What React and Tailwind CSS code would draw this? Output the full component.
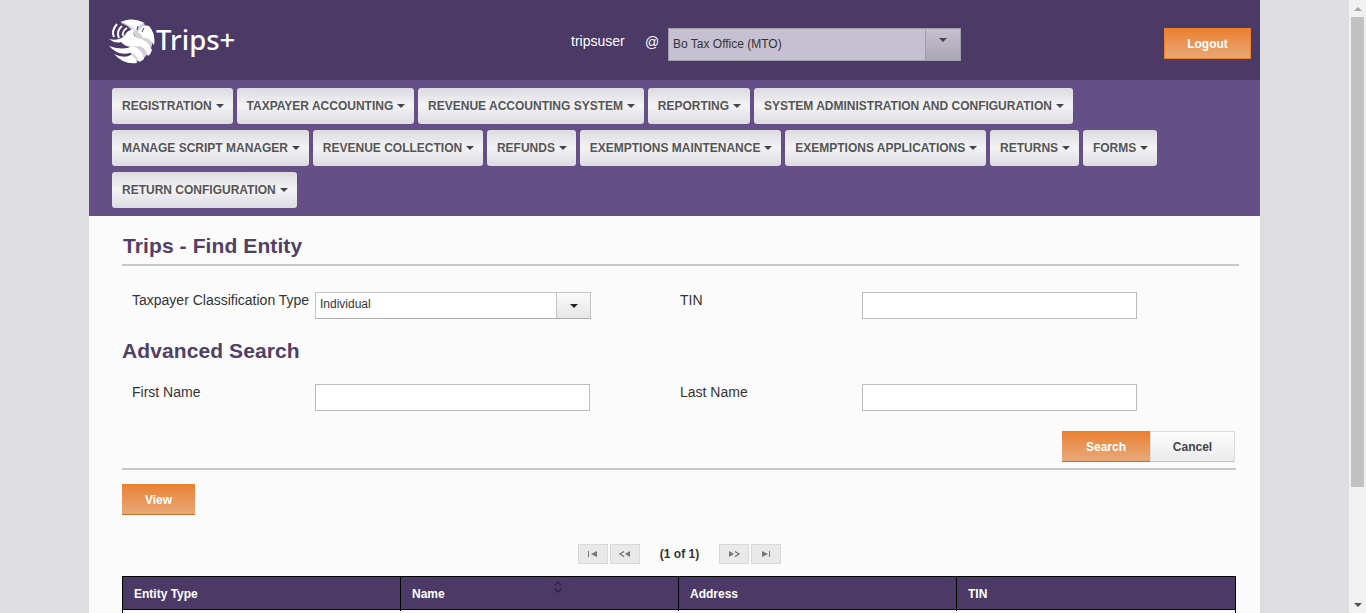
import React from "react";

const row1 = ["REGISTRATION", "TAXPAYER ACCOUNTING", "REVENUE ACCOUNTING SYSTEM", "REPORTING", "SYSTEM ADMINISTRATION AND CONFIGURATION"];
const row2 = ["MANAGE SCRIPT MANAGER", "REVENUE COLLECTION", "REFUNDS", "EXEMPTIONS MAINTENANCE", "EXEMPTIONS APPLICATIONS", "RETURNS", "FORMS"];
const row3 = ["RETURN CONFIGURATION"];

const Caret = ({ className = "border-t-[#444]" }) => (
  <span className={`inline-block w-0 h-0 border-x-4 border-x-transparent border-t-4 ${className}`}></span>
);

const Logo = () => (
  <svg width="46" height="46" viewBox="0 0 46 46" className="shrink-0 mt-0.5">
    {/* sphere */}
    <path d="M20 1.500 A21.500 21.500 0 1 1 12 42 Q26 38 27 24 Q26 10 12 5 Q16 2 20 1.500Z" fill="#d3d0da" />
    {/* swooshes */}
    <path d="M11 4 Q24 -1 36 5 Q29 6 27 13 Q21 6 11 4Z" fill="#fff" />
    <path d="M29 14 Q34 6 40 8 Q47 16 45 27 Q39 18 34 20 Q32 16 29 14Z" fill="#fff" />
    <path d="M0 21 Q13 24 18 14 Q22 11 25 11 Q23 18 28 20 Q38 21 43 32 Q42 36 39 38 Q36 28 29 28 Q18 31 12 24 Q6 26 0 21Z" fill="#fff" />
    <path d="M0 28 Q15 33 23 28 Q33 30 35 41 Q33 43 30 44 Q28 36 21 35 Q9 38 0 28Z" fill="#fff" />
    <path d="M5 36 Q15 41 22 37 Q27 39 28 45 Q15 47 5 36Z" fill="#fff" />
    <path d="M8 6 Q2 13 5 19" fill="none" stroke="#fff" strokeWidth="2" />
    <path d="M13 8 Q7 13 10 20" fill="none" stroke="#fff" strokeWidth="2" />
    <path d="M18 10 Q13 13 14 18" fill="none" stroke="#fff" strokeWidth="1.800" />
    <path d="M29 8 L28 12 M35 10 L33 14" stroke="#4b3966" strokeWidth="1" />
  </svg>
);

const NavButton = ({ label }) => (
  <button className="h-9 pl-2.5 pr-[8.8px] flex items-center gap-1 rounded-[3px] text-xs font-bold text-[#555] whitespace-nowrap bg-gradient-to-b from-[#dcdce0] via-[#f3f3f6] to-[#dbdbe1]">
    {label}
    <Caret />
  </button>
);

const Input = () => (
  <input className="w-[275px] h-[27px] bg-white border border-[#bcbcbc]" />
);

const OrangeButton = ({ label, className }) => (
  <button className={`pt-px text-xs font-bold text-white bg-gradient-to-b from-[#ea802c] to-[#e8a877] border-b border-[#c46f2c] ${className}`}>
    {label}
  </button>
);

const PagerButton = ({ children }) => (
  <span className="w-[30px] h-5 flex items-center justify-center bg-[#e9e9e9] border border-[#d8d8d8]">
    <svg width="14" height="6" viewBox="0 0 14 6" fill="#777">{children}</svg>
  </span>
);

export default function App() {
  return (
    <div className="h-screen flex overflow-hidden bg-[#dedee0] text-[#333] font-['Liberation_Sans',Arial,sans-serif]">
      <div className="flex-1 min-w-0">
        <div className="w-[1171px] mx-auto h-[613px] overflow-hidden bg-[#fbfbfb]">
          <header className="h-20 bg-[#4b3966] flex items-center">
            <div className="ml-5 flex items-center w-[462px]">
              <Logo />
              <span className="ml-px text-[27.5px] leading-none text-white font-medium font-['Noto_Sans',sans-serif]">Trips+</span>
            </div>
            <span className="text-sm text-white w-[74px] mt-0.5">tripsuser</span>
            <span className="text-sm text-white w-[23px] mt-1">@</span>
            <div className="w-[293px] h-[33px] flex bg-[#c6c1d0] border border-[#a19cab] mt-[9px]">
              <span className="flex-1 pl-[4px] text-xs leading-[31px] text-[#333]">Bo Tax Office (MTO)</span>
              <span className="w-[35px] flex justify-center pt-[9px] border-l border-[#a19cab] bg-gradient-to-b from-[#c6c1d0] to-[#aaa6b3]">
                <Caret />
              </span>
            </div>
            <OrangeButton label="Logout" className="ml-auto mr-[9px] w-[87px] h-[31px] mt-[7px] border border-[#ea802c]" />
          </header>

          <nav className="h-[136px] bg-[#654f87] pl-[23px] pt-2 flex flex-col gap-1.5">
            {[row1, row2, row3].map((row, i) => (
              <div key={i} className="flex gap-1">
                {row.map((label) => (
                  <NavButton key={label} label={label} />
                ))}
              </div>
            ))}
          </nav>

          <main className="pl-[33px] pr-[21px]">
            <h1 className="pt-[17px] pl-px h-12 text-[21px] tracking-[0.1px] font-bold leading-[26px] text-[#4f4066]">Trips - Find Entity</h1>
            <hr className="border-t-2 border-[#c8c8c8]" />

            <div className="mt-[26px] flex pl-2.5 text-sm">
              <label className="w-[183px] -mt-0.5 whitespace-nowrap">Taxpayer Classification Type</label>
              <div className="w-[276px] h-[27px] flex bg-white border border-[#c4c4c4] border-b-[#aaa] text-xs leading-[23px] pl-1">
                <span className="flex-1">Individual</span>
                <span className="w-[34px] flex items-center justify-center border-l border-[#c4c4c4] bg-gradient-to-b from-[#fafafa] to-[#e6e6e6]">
                  <Caret className="border-t-[#222]" />
                </span>
              </div>
              <label className="ml-[89px] w-[182px] -mt-0.5">TIN</label>
              <Input />
            </div>

            <h2 className="mt-[19px] h-[26px] text-[21px] tracking-[0.1px] font-bold leading-[26px] text-[#4f4066]">Advanced Search</h2>

            <div className="mt-[20px] flex pl-2.5 text-sm">
              <label className="w-[183px] -mt-0.5">First Name</label>
              <Input />
              <label className="ml-[90px] w-[182px] -mt-0.5">Last Name</label>
              <Input />
            </div>

            <div className="mt-5 mr-[4px] flex justify-end">
              <OrangeButton label="Search" className="w-[88px] h-[31px]" />
              <button className="w-[85px] h-[31px] text-xs font-bold text-[#444] border border-[#dcdcdc] border-b-[#c4c4c4] bg-gradient-to-b from-[#fcfcfc] to-[#ebebeb]">Cancel</button>
            </div>

            <hr className="mt-1.5 mr-[3px] border-t-2 border-[#c8c8c8]" />

            <OrangeButton label="View" className="block mt-3.5 w-[73px] h-[31px]" />

            <div className="mt-[29px] mr-[3px] h-5 flex items-center pl-[456px] text-xs">
              <div className="flex gap-0.5">
                <PagerButton><path d="M2 0h1v6H2zM11 0v6L5 3z" /></PagerButton>
                <PagerButton>
                  <path d="M6 .5 2 3l4 2.500" fill="none" stroke="#777" strokeWidth="1.300" />
                  <path d="M12 0v6L7 3z" />
                </PagerButton>
              </div>
              <span className="w-[79px] text-center font-bold text-[#333]">(1 of 1)</span>
              <div className="flex gap-0.5">
                <PagerButton>
                  <path d="M2 0v6l5-3z" />
                  <path d="M8 .5 12 3 8 5.500" fill="none" stroke="#777" strokeWidth="1.300" />
                </PagerButton>
                <PagerButton><path d="M3 0v6l6-3zM10 0h1v6h-1z" /></PagerButton>
              </div>
            </div>

            <div className="mt-3 mr-[3px] border border-black">
              <div className="grid grid-cols-[278px_278px_278px_1fr] h-8 bg-[#4b3966] text-xs font-bold text-white leading-[34px]">
                <div className="pl-[11px] border-r border-black">Entity Type</div>
                <div className="pl-[11px] border-r border-black relative">
                  Name
                  <svg width="10" height="12" viewBox="0 0 10 12" className="absolute right-[115px] top-1" fill="none" stroke="#2f2440" strokeWidth="1.5">
                    <path d="M1.500 4.500 5 1l3.500 3.500M1.500 7.500 5 11l3.500-3.500" />
                  </svg>
                </div>
                <div className="pl-[11px] border-r border-black">Address</div>
                <div className="pl-[11px]">TIN</div>
              </div>
              <div className="h-10 border-t border-black"></div>
            </div>
          </main>
        </div>
      </div>

      <aside className="w-[17px] h-[613px] bg-[#f1f1f1] flex flex-col items-center">
        <div className="h-[17px] flex items-center justify-center">
          <span className="w-0 h-0 border-x-[4px] border-x-transparent border-b-[4px] border-b-[#a3a3a3]"></span>
        </div>
        <div className="w-[13px] h-[470px] bg-[#c1c1c1]"></div>
        <div className="mt-auto h-[17px] flex items-center justify-center">
          <span className="w-0 h-0 border-x-[4px] border-x-transparent border-t-[4px] border-t-[#505050]"></span>
        </div>
      </aside>
    </div>
  );
}
